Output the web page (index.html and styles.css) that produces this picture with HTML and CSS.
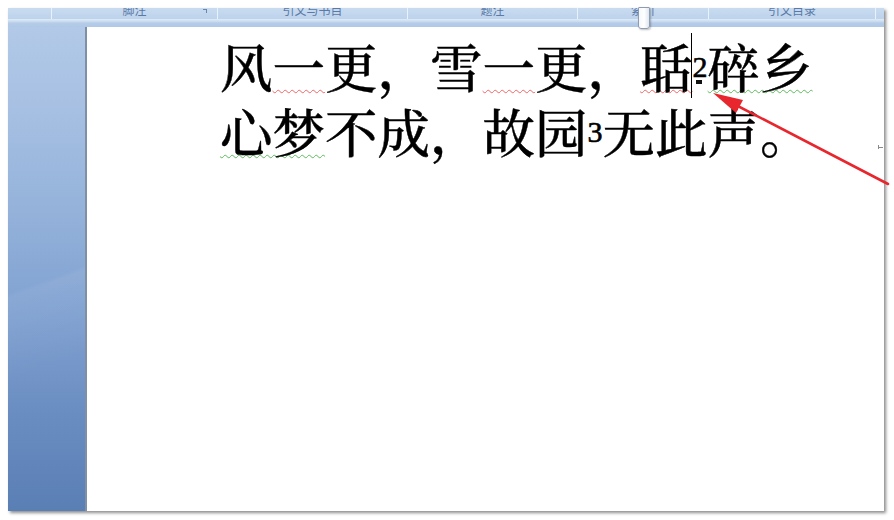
FILE: index.html
```html
<!DOCTYPE html>
<html lang="zh">
<head>
<meta charset="utf-8">
<title>Word</title>
<link rel="stylesheet" href="styles.css">
</head>
<body>
<div class="shot">
  <div class="ribbon">
    <div class="tab t0"></div>
    <div class="tab t1"><span class="lbl">脚注</span><span class="launch"></span></div>
    <div class="tab t2"><span class="lbl">引文与书目</span></div>
    <div class="tab t3"><span class="lbl">题注</span></div>
    <div class="tab t4"><span class="lbl">索引</span></div>
    <div class="tab t5"><span class="lbl">引文目录</span></div>
    <div class="tab t6"></div>
  </div>
  <div class="band"></div>
  <div class="main">
    <div class="sidebar"></div>
    <div class="page">
      <div class="doc">
        <p class="line">风<span class="wv red">一</span>更，雪<span class="wv red">一</span>更，<span class="wv red">聒</span><span class="caret"></span><sup class="fn">2</sup><span class="wv green">碎乡</span></p>
        <p class="line"><span class="wv green">心梦</span>不成，故园<sup class="fn">3</sup>无此声。</p>
      </div>
      <span class="rmark"></span>
    </div>
  </div>
</div>
<div class="thumb"></div>
<svg class="arrow" width="894" height="520" viewBox="0 0 894 520">
  <line x1="888" y1="184" x2="732" y2="103" stroke="#e8262d" stroke-width="2.6" stroke-linecap="round"/>
  <polygon points="713,93 743,100 736,113" fill="#e8262d"/>
</svg>
</body>
</html>
```

FILE: styles.css
```css
html, body {
  margin: 0;
  padding: 0;
  background: #ffffff;
  width: 894px;
  height: 520px;
  overflow: hidden;
}

.shot {
  margin: 8px 0 0 8px;
  width: 876px;
  height: 503px;
  display: flex;
  flex-direction: column;
  box-shadow: 2px 2px 3px rgba(0, 0, 0, 0.45);
  background: #ffffff;
  overflow: hidden;
}

.ribbon {
  height: 11px;
  display: flex;
  background: #c4d8ef;
  overflow: hidden;
}

.tab {
  position: relative;
  height: 11px;
  box-sizing: border-box;
  border-right: 1px solid #e9f1fa;
  background: linear-gradient(#c8dbf0, #bdd3ec);
  text-align: center;
  overflow: hidden;
}

.t0 { width: 44px; }
.t1 { width: 166px; }
.t2 { width: 190px; }
.t3 { width: 170px; }
.t4 { width: 131px; }
.t5 { width: 167px; }
.t6 { flex: 1; border-right: none; }

.lbl {
  display: block;
  font-family: "Noto Sans CJK SC", sans-serif;
  font-size: 12px;
  line-height: 12px;
  margin-top: -4px;
  color: #5a79a6;
}

.launch {
  position: absolute;
  right: 10px;
  top: 1px;
  width: 3px;
  height: 3px;
  border-top: 1px solid #6b86ad;
  border-right: 1px solid #6b86ad;
}

.band {
  height: 8px;
  background: linear-gradient(#dfebf7 0, #cfe0f2 2px, #b6cce8 4px, #b0c8e6 8px);
}

.main {
  flex: 1;
  display: flex;
}

.sidebar {
  width: 77px;
  border-right: 2px solid #7e8fa6;
  background:
    linear-gradient(160deg, rgba(255,255,255,0) 0, rgba(255,255,255,0) 52%, rgba(255,255,255,0.06) 53%, rgba(255,255,255,0) 70%),
    linear-gradient(#b2c9e7 0%, #a9c2e4 14%, #94b2da 38%, #7d9ecf 62%, #6a8dc1 80%, #5a7fb5 100%);
}

.page {
  flex: 1;
  position: relative;
  background: #ffffff;
}

.doc {
  padding: 6px 0 0 133px;
  font-family: "Noto Serif CJK SC", "Noto Sans CJK SC", serif;
  font-size: 52.5px;
  font-weight: 500;
  -webkit-text-stroke: 0.4px #000000;
  color: #000000;
}

.line {
  margin: 0;
  height: 65px;
  line-height: 65px;
  white-space: nowrap;
}

.wv {
  text-decoration-line: underline;
  text-decoration-style: wavy;
  text-decoration-thickness: 1px;
  text-underline-offset: 1px;
}

.red { text-decoration-color: #f06666; }
.green { text-decoration-color: #5cbc5c; }

.fn {
  font-family: "Liberation Serif", serif;
  font-size: 30px;
  font-weight: normal;
  -webkit-text-stroke: 0.6px #000000;
  line-height: 0;
  vertical-align: 11px;
}

.caret {
  position: relative;
}

.caret::after {
  content: "";
  position: absolute;
  left: -2px;
  top: 5px;
  width: 1px;
  height: 65px;
  background: #000000;
}

.caret::before {
  content: "";
  position: absolute;
  left: 3px;
  top: 52px;
  width: 6px;
  height: 4px;
  background: #111111;
}

.rmark {
  position: absolute;
  right: 1px;
  top: 120px;
  width: 5px;
  height: 1px;
  background: #8a8a8a;
}

.rmark::before {
  content: "";
  position: absolute;
  left: 0;
  top: -2px;
  width: 1px;
  height: 4px;
  background: #8a8a8a;
}

.thumb {
  position: absolute;
  left: 638px;
  top: 7px;
  width: 12px;
  height: 22px;
  box-sizing: border-box;
  border: 1px solid #8e9cb2;
  border-radius: 1px 1px 3px 3px;
  background: linear-gradient(90deg, #f4f7fb, #ffffff 50%, #dfe6ef);
  box-shadow: 1px 1px 2px rgba(0, 0, 0, 0.25);
}

.arrow {
  position: absolute;
  left: 0;
  top: 0;
  pointer-events: none;
}
```
